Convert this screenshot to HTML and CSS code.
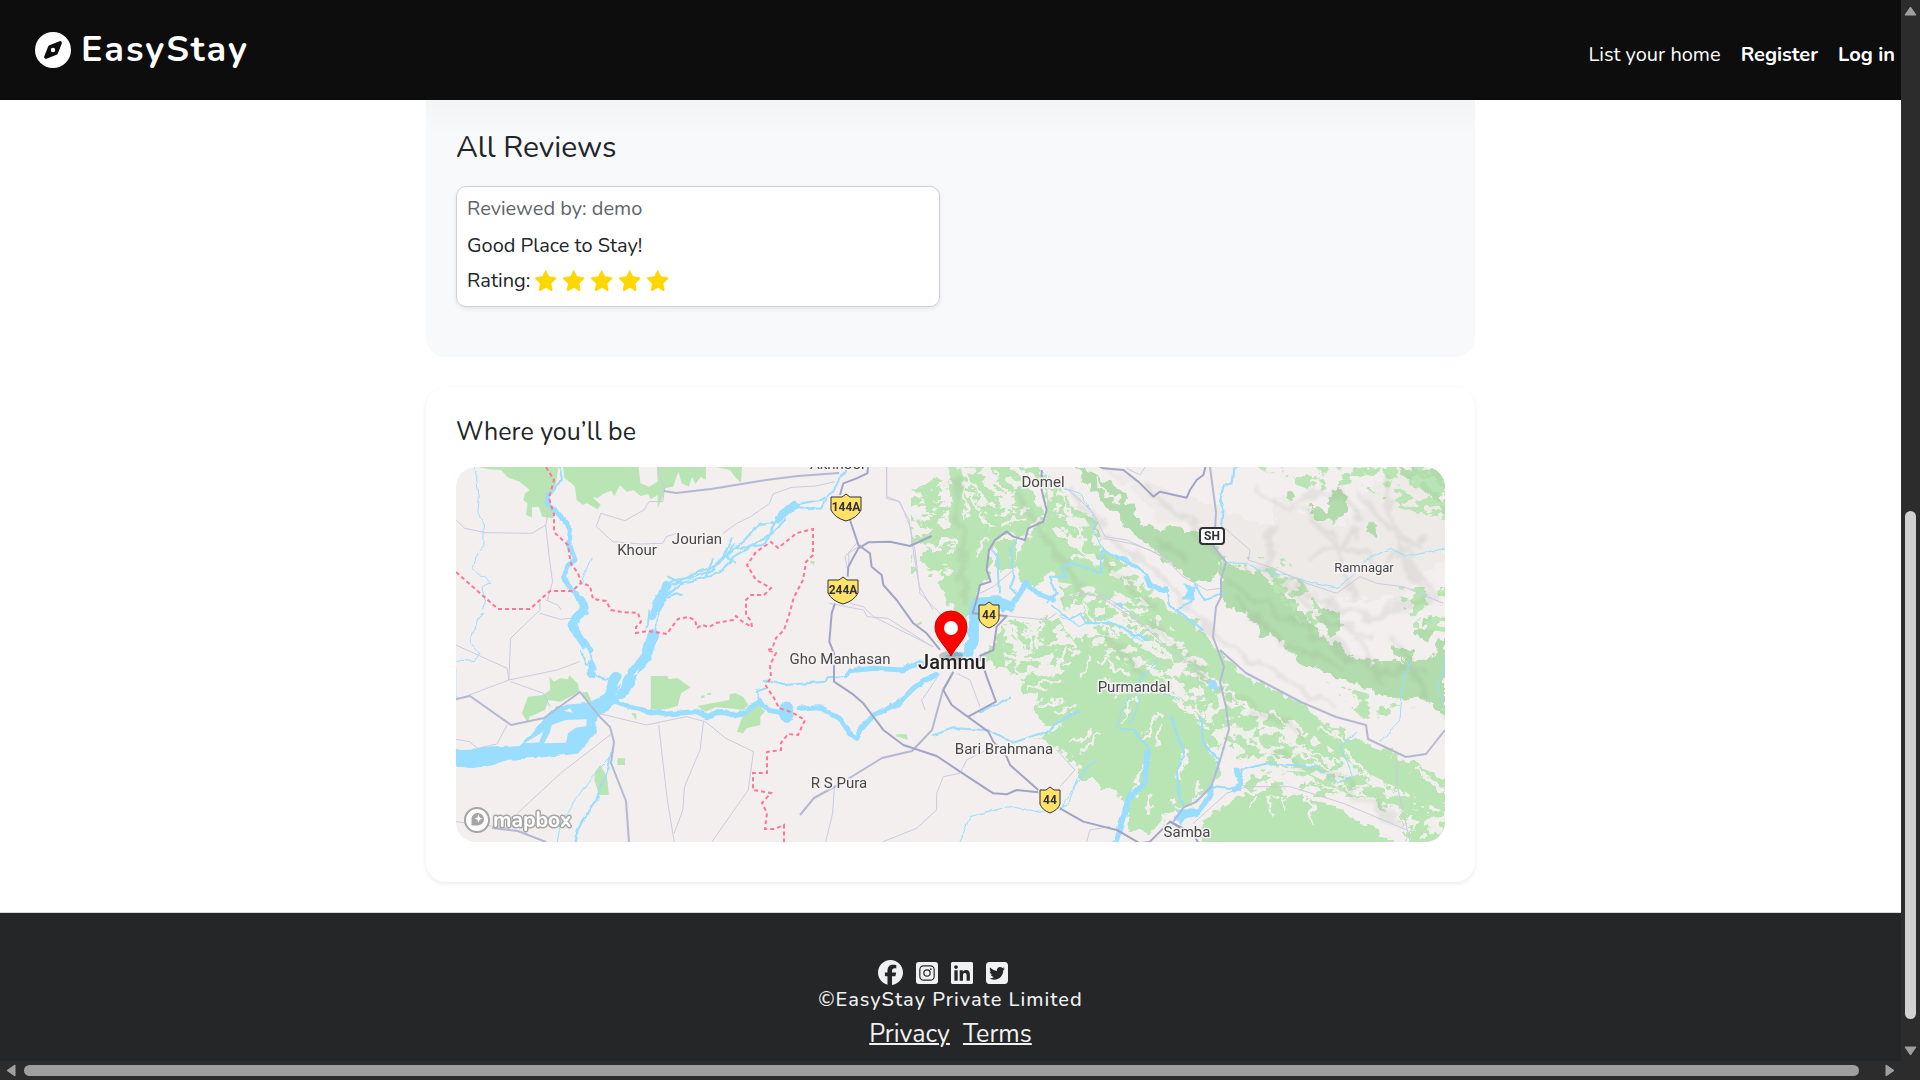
FILE: index.html
```html
<!DOCTYPE html>
<html lang="en">
<head>
<meta charset="utf-8">
<meta name="viewport" content="width=device-width, initial-scale=1">
<title>EasyStay</title>
<link rel="stylesheet" href="styles.css">
</head>
<body>
<div class="window">
  <div class="page">
    <header class="navbar">
      <a class="brand" href="#">
        <svg class="brand-icon" viewBox="0 0 512 512" aria-hidden="true"><path fill="currentColor" d="M256 512A256 256 0 1 0 256 0a256 256 0 1 0 0 512zm50.700-186.900L162.400 380.600c-19.400 7.500-38.500-11.600-31-31l55.500-144.300c3.300-8.500 9.900-15.100 18.400-18.400l144.300-55.500c19.400-7.500 38.500 11.600 31 31L325.100 306.700c-3.200 8.500-9.900 15.100-18.400 18.400zM288 256a32 32 0 1 0-64 0 32 32 0 1 0 64 0z"/></svg>
        <span>EasyStay</span>
      </a>
      <nav class="nav-links">
        <a href="#">List your home</a>
        <a class="strong" href="#">Register</a>
        <a class="strong" href="#">Log in</a>
      </nav>
    </header>

    <main class="content">
      <section class="reviews">
        <h2>All Reviews</h2>
        <article class="review-card">
          <p class="reviewer">Reviewed by: demo</p>
          <p>Good Place to Stay!</p>
          <p class="rating">Rating:
            <span class="stars" role="img" aria-label="5 out of 5">
              <svg viewBox="0 0 24 24"><use href="#star"/></svg>
              <svg viewBox="0 0 24 24"><use href="#star"/></svg>
              <svg viewBox="0 0 24 24"><use href="#star"/></svg>
              <svg viewBox="0 0 24 24"><use href="#star"/></svg>
              <svg viewBox="0 0 24 24"><use href="#star"/></svg>
            </span>
          </p>
        </article>
      </section>

      <section class="location">
        <h3>Where you’ll be</h3>
        <svg class="map" viewBox="0 0 989 375" preserveAspectRatio="xMidYMid slice" role="img" aria-label="Map of Jammu">
          <defs>
            <path id="star" d="M12 1.200l3.300 6.600 7.300 1.100c1 .2 1.300 1.200.6 1.900l-5.200 5.200 1.200 7.200c.2 1-.8 1.600-1.600 1.200L12 20.900l-6.600 3.500c-.8.400-1.800-.3-1.600-1.200L5 16 -.2 10.800c-.7-.7-.4-1.700.6-1.900L7.700 7.800 11 1.200c.3-.7.700-.7 1 0z" transform="translate(.6 -.6) scale(.96)"/>
            <filter id="rough" x="0" y="0" width="989" height="375" filterUnits="userSpaceOnUse">
              <feTurbulence type="fractalNoise" baseFrequency=".09" numOctaves="3" seed="4" result="n"/>
              <feDisplacementMap in="SourceGraphic" in2="n" scale="17" xChannelSelector="R" yChannelSelector="G"/>
            </filter>
            <filter id="mottle" x="0" y="0" width="989" height="375" filterUnits="userSpaceOnUse">
              <feTurbulence type="fractalNoise" baseFrequency=".07 .1" numOctaves="4" seed="12"/>
              <feColorMatrix values="0 0 0 0 0  0 0 0 0 0  0 0 0 0 0  24 0 0 0 -12.500" result="spots"/>
              <feComposite in="SourceGraphic" in2="spots" operator="in"/>
            </filter>
            <filter id="wobble" x="-10" y="-10" width="1009" height="395" filterUnits="userSpaceOnUse">
              <feTurbulence type="fractalNoise" baseFrequency=".08" numOctaves="2" seed="9" result="n"/>
              <feDisplacementMap in="SourceGraphic" in2="n" scale="5" xChannelSelector="R" yChannelSelector="G"/>
            </filter>
            <filter id="soft" x="0" y="0" width="989" height="375" filterUnits="userSpaceOnUse">
              <feTurbulence type="fractalNoise" baseFrequency=".05" numOctaves="3" seed="2" result="n"/>
              <feDisplacementMap in="SourceGraphic" in2="n" scale="22" xChannelSelector="R" yChannelSelector="G"/>
              <feGaussianBlur stdDeviation="1.500"/>
            </filter>
          </defs>
          <rect class="land" width="989" height="375"/>

          <!-- forests of the western plain -->
          <g class="forest">
            <g transform="translate(-36 -97) scale(.3444 .3333)">
              <path d="M170 291H402L395 340 375 380 388 445 355 440 345 410 325 412V442L308 435 312 400 300 390 305 370 318 360 290 335 255 322 235 300 200 298Z"/>
              <path d="M415 291H635L640 340 665 350 690 335 688 291H830V330L815 320 800 342 790 320 780 350 760 340 750 305 735 350 712 355 705 380 690 415V375L670 388 662 372 640 378 620 360 600 365 580 345 565 378 555 362 535 370 515 385 500 380 525 405 515 418 485 400 472 404 455 390 450 350 440 340 420 325Z"/>
              <path d="M860 291H935L932 338 918 325 900 300ZM1132 572l14 2-2 10-10-4z"/>
            </g>
            <g transform="translate(-16 133) scale(.3444 .3333)">
              <path d="M238 340L255 290 300 285 320 270 318 230 330 245 350 235 372 238 375 226 400 250 405 275 350 305 315 300 305 330 260 350 255 368Z"/>
              <path d="M612 228L660 228 665 238 690 234 710 250 728 262 700 280 690 318 655 328H612Z"/>
              <path d="M748 318L770 335 800 322 840 325 880 330 895 315 880 290 858 280 842 282 840 300Z"/>
              <path d="M862 395L880 345 925 312 943 335 930 350 930 375 890 385 880 400Z"/>
              <path d="M465 495L485 530 490 585 462 585 448 540 450 515ZM515 475h22v20h-22zM555 340h15v20zM412 278L428 275 442 310 430 315ZM758 288l10-2v8h-10zM775 280h12v4h-12zM1385 72l12-8 3 6-14 8zM1325 403h30l4 16-34-10z"/>
            </g>
          </g>

          <!-- forests of the hills -->
          <g filter="url(#rough)">
            <g class="shade" transform="translate(604 -7) scale(.3333)">
              <path d="M120 20L220 90 300 190 420 190 470 230 500 330 560 320 620 400 800 420 1000 420 1155 300V20H1000L900 130 850 200 720 170 700 120 650 100 640 200Z"/>
            </g>
            <g class="forest" transform="translate(324 -7) scale(.3333)">
              <path d="M505 10H680L720 60 770 110 795 180 745 200 730 240 690 210 640 250 625 300 635 350 600 385 575 440 560 490 515 485 510 430 470 370 520 330 500 300 530 260 510 200 505 120Z"/>
              <path d="M395 90l70-35 20 10-50 40zM420 130l60-20 10 15-50 30zM410 190l80-30 5 20-50 30zM430 220l60-10 10 20-50 30zM420 290l70-30 15 20-50 40zM440 320l50-15 20 15-55 20z"/>
              <path d="M780 40L830 60 860 110 900 150 950 190 960 240 940 300 960 330 920 330 870 320 840 350 790 350 760 380 710 350 700 310 740 230 790 190 805 140Z"/>
              <path d="M700 20H780V60L760 50Z"/>
              <path d="M650 240L710 240 700 320 660 340 645 300Z"/>
              <path d="M590 590L650 540 670 480 760 490 840 470 860 520 930 560 1000 560 1090 640 1140 650 1200 720V860L1150 900 1120 870 1050 790 1060 860 1110 880 1060 950 1010 985 960 985 950 910 870 890 780 830 850 800 790 790 760 750 790 720 730 700 700 650 640 610Z"/>
              <path d="M1120 870L1200 900 1190 1010 1150 1090 1100 1115 1045 1110 1060 1030 1110 920Z"/>
            </g>
            <g class="forest" transform="translate(604 -7) scale(.3333)">
              <path d="M0 130L60 180 130 250 170 300 250 350 270 390 330 450 400 480 450 540 500 590 560 650 640 690 700 720 790 790 900 840 960 870 1030 900 1155 960V1160H1050L1010 1060 930 1020 860 1000 790 970 750 940 640 920 560 900 500 860 490 800 430 740 370 690 300 640 250 590 170 560 90 500 0 440Z"/>
              <path d="M0 560L90 520 190 560 290 600 350 700 480 760 490 880 450 990 370 1040 290 980 330 900 300 830 250 1000 200 1070 170 960 60 960Z"/>
              <path d="M240 1110L200 1060 290 980 350 1040 300 1090Z"/>
              <path d="M420 1160L430 1080 520 1020 560 990 640 1020 700 990 800 1040 870 1060 960 1120 1040 1160Z"/>
            </g>
            <g class="forest deep" transform="translate(604 -7) scale(.3333)">
              <path d="M40 20L150 70 220 130 250 200 330 210 400 215 480 260 490 330 440 370 400 370 330 310 270 260 200 200 130 130 70 60Z"/>
              <path d="M490 310L560 320 620 360 690 415 740 480 800 540 900 600 1000 610 1050 600 1110 610 1130 560 1155 540V780L1110 720 1000 710 960 700 880 670 800 640 720 610 690 560 600 520 560 460 500 440 480 400Z"/>
              <path d="M810 85L860 110 865 160 820 190 770 170 745 140 810 145Z"/>
              <path d="M1010 20H1130L1155 60V170L1120 120 1060 70ZM930 190l25 15-15 30-15-15zM670 100l40 15v10l-40-10zM750 460l60-20 40 50-30 40zM1060 510l60-50 20 40-50 40zM1000 550l60 30-10 30-40-20z"/>
            </g>
            <!-- clearings and valleys -->
            <g class="glade" transform="translate(324 -7) scale(.3333)">
              <path d="M540 60l25 110M560 40l60 90M600 150l30 60M580 90l10 60M640 40l60 80M660 120l50 30M590 290l30-60M670 190l60-20M870 170l40 60M830 90l50 100M890 280l40 20M690 500l50 70M740 490l20 90M790 490l-20 70M680 590l70 10M710 640l80-20M740 680l110-20M860 560l-40 80M850 720l-60 10M820 760l60-20M930 590l-30 60M980 650l30 60M1060 710l-30 80M870 860l70-50M900 880l60-60M1130 760l-40 80M1100 900l-40 100M1120 1000l-20 70M960 600l80 40M840 520l20 30"/>
            </g>
            <g class="glade" transform="translate(604 -7) scale(.3333)">
              <path d="M0 470l90 50M60 440l110 90M150 430l90 60M200 480l180 150M380 630l90 60M250 600l130 120M320 680l60 60M490 680l120 100M510 720l80 40M640 760l90 60M520 820l150 90M660 840l180 70M700 870l160 90M860 880l130 130M780 800l80 40M820 960l120 60M560 930l240 50M390 760l60 50M340 720l120 60M300 800l-10 60M430 850l50 50M470 940l80 10M620 1000l20 70M680 1000l-10 50M740 1010l20 80M590 1000l-20 50M1060 930l90 60M1000 1040l50 80M380 870l-30 100M420 960l-10 50M260 900l-40 90M100 60l80 70M20 220l90 90M160 330l90 60"/>
            </g>
          </g>

          <!-- broken tree cover: open ground inside the forests, groves outside them -->
          <g class="open" filter="url(#mottle)">
            <path d="M500 0H560L575 45 545 60 510 30ZM545 150L600 150 625 185 590 225 550 210ZM600 115L680 125 790 235 820 290 770 320 745 260 700 210 640 185 600 150ZM770 235L840 255 900 300 989 345V375H960L880 335 800 320ZM615 45L650 70 700 120 680 130 630 90ZM590 10L610 20 640 70 620 100 595 60Z"/>
          </g>
          <g class="forest" filter="url(#mottle)">
            <path d="M800 0H989V55L940 40 900 15 860 25 820 10ZM940 120H989V165L955 160ZM455 25L500 15 500 110 455 110ZM765 300L850 305 900 330 800 330ZM870 215L960 240 910 255ZM790 90L830 90 870 150 850 165Z"/>
          </g>

          <!-- relief of the ridges -->
          <g filter="url(#soft)" class="relief">
            <path d="M610 20L650 70 700 105 740 150 800 195 880 240M500 10l3 60 5 70M560 20l30 50 40 60M640 90l60 50M690 150l70 70 90 50M650 170l40 40M690 20l40 35 30 10M720 45l40 40M770 110l40 30 60 30 40 30 60 5M800 100l60 30 50 20 70-20M840 40l40 30 20 60M900 20l30 40 40 20M930 10l10 60 30 60M820 60l-10 50M870 140l50 10 60-20M820 290l60 20 70 50M700 70l30 20"/>
            <path d="M800 20l30 20 40-20 40 30M850 90l40-10 30 20 50-30M900 60l-20 40M950 90l30 40M860 60l20 20M780 130l50 50 60 20M900 170l30 50M940 170l30 60M830 110l30 40 60 20"/>
          </g>

          <!-- rivers and streams -->
          <g class="water" filter="url(#wobble)">
            <g transform="translate(-36 -97) scale(.3444 .3333)">
              <path class="w1" d="M158 280L165 330 172 380 168 430 187 465 185 530 160 560 152 590 175 615 190 618 208 640 180 655 190 690 185 720M500 565L480 610 468 640"/>
              <path class="w2" d="M408 280L415 325 395 355 372 375"/>
              <path class="w4" d="M370 375V400L410 440 437 480 432 520 450 570 425 590 420 625 445 665 470 690 480 725"/>
              <path class="w2" d="M1250 285L1215 330 1200 365 1160 390 1085 405 1060 440 1030 455 985 462 945 510 905 545 870 575 850 600 800 620 740 630 715 650 700 690M1180 385L1165 415 1130 418 1095 410M1060 450L1020 490 960 530 910 560 880 600 820 625 760 640 710 680M905 505l-20 50 30 20M1030 455l-30 70-80 10M850 565l-20 55M720 620l40 20-40 30M700 690l40-20 20 5"/>
              <path class="w7" d="M1088 405L1068 422 1040 445"/>
              <path class="w2" d="M915 520L895 550 850 590 790 615 715 655"/>
              <path class="w7" d="M715 645L700 690 680 720"/>
            </g>
            <g transform="translate(-16 133) scale(.3444 .3333)">
              <path class="w7" d="M410 0L420 20 382 75 405 110 430 150"/>
              <path class="w2" d="M410 155L425 195M430 150L455 205"/>
              <path class="w7" d="M440 190L440 222"/>
              <path class="w2" d="M450 220L480 240 520 225M655 0L635 30M605 30L600 85M640 30L625 90"/>
              <path class="w7" d="M635 0L615 50"/>
              <path class="w9" d="M620 105L600 170 560 220 530 280"/>
              <path class="w9" d="M510 235L495 285 450 340"/>
              <path class="fill" d="M40 450L230 440 270 400 310 350 340 318 430 310 490 280 530 290 460 350 450 400 400 460 300 470 200 478 150 495 90 503 40 496Z"/>
              <path class="w4" d="M500 300L560 325 650 343 740 335 775 350 800 338 830 338 860 350 890 335 930 300 955 335 985 340"/>
              <ellipse class="fill" cx="1006" cy="335" rx="22" ry="30"/>
              <path class="w4" d="M1043 325L1100 320 1140 345 1165 360 1190 400 1210 415 1225 385 1260 345 1330 310 1380 260 1440 225"/>
              <path class="w2" d="M930 310L920 275 945 265M940 240L1000 255 1120 245 1125 232 1180 228"/>
              <path class="w4" d="M1180 222L1190 212 1260 205 1340 210 1400 185 1420 195"/>
              <path class="w2" d="M500 440L490 500 460 590 425 640 400 690 390 730"/>
              <path class="w1" d="M490 480L430 545 380 620 350 670 340 730M130 40L105 60 90 130 115 160 100 185 46 180M46 210V300"/>
            </g>
            <g transform="translate(324 -7) scale(.3333)">
              <path class="w4" d="M670 450L700 430 740 370 770 400 820 420M450 615L540 580"/>
              <path class="w9" d="M560 590L580 540 580 490 590 440"/>
              <path class="w9" d="M590 430L650 425 690 440"/>
              <path class="w2" d="M630 265L655 290 660 400M710 235L690 270 700 350 690 380 710 400M800 430L830 400 810 350 860 350 840 325 880 310 960 340 965 270 1040 300 1100 345M820 440L870 480 900 460 920 490 1000 490 1100 540M460 825L520 805 620 810 700 848 800 815 850 775 900 755M600 760L690 710"/>
              <path class="w4" d="M1050 1000L1010 1140M1100 350L1110 380 1160 390"/>
              <path class="w1" d="M790 35L840 80 900 100 940 170 940 210 970 265M1140 600L1080 650 1080 720 1050 790M950 900L900 940 870 1030 780 1060 680 1040 570 1070 540 1145M1110 690L1200 720"/>
            </g>
            <g transform="translate(604 -7) scale(.3333)">
              <path class="w2" d="M545 10L520 30 515 70 490 80 480 120 490 150 487 200M130 265L170 290 220 320 262 345 270 385 320 390 325 430 345 450 390 430 410 370 430 420 470 410 490 395M345 450L380 470 425 510M170 800L220 810 270 870 255 970 200 1020 180 1120 160 1145M333 770L355 830 375 890 350 930 360 1020 375 1040M420 770L430 850 480 900 460 960M450 980L540 990 545 930 620 910 760 920"/>
              <path class="w4" d="M260 880L255 970 205 1020 180 1100M350 1075L410 1060 450 1010 450 975M530 930L545 970 520 990"/>
              <path class="fill" d="M372 375l35 5-8 40-32 0 18-25zM447 665l18-4 8 28-24-2zM310 378h14v18h-14zM350 1050l60 0-50 40zM165 430h18l5 15z"/>
              <path class="w1" d="M490 310L560 310 600 330 680 345 760 370 830 385 880 340 920 300 990 265 1040 290 1155 265M1050 605L1030 660 1020 780 960 845M1155 590L1135 680 1155 750M760 910L830 970 880 950 840 860 890 820M290 600L210 700 170 800M100 900L40 990 0 1050M0 470L60 500 120 470 180 500 250 545"/>
            </g>
          </g>
          <g class="island" transform="translate(-16 133) scale(.3444 .3333)">
            <path d="M302 430L366 428 372 400 395 383 425 378 426 358 365 360 325 375 318 400ZM245 430L300 395 288 427ZM360 333L378 325 386 338ZM413 150L425 142 436 165 435 185ZM512 262L532 222 528 250ZM560 228L578 205 572 222Z"/>
          </g>

          <!-- local roads -->
          <g class="road minor">
            <g transform="translate(-36 -97) scale(.3444 .3333)">
              <path d="M105 450L130 475 190 488 325 490 365 465 375 560 385 635 370 690M365 465L372 430M710 355L705 395 665 395 650 420 595 452 525 430 512 470 560 515 640 522 705 520 715 500 745 490M690 291L695 320 710 350M880 490L920 460 960 440 1015 400 1025 372 1080 352 1150 348 1205 335M1355 291L1355 385 1390 395 1420 450 1435 560 1450 650 1490 720M1280 525L1245 550 1245 590M365 690L400 705 410 720"/>
            </g>
            <g transform="translate(-16 133) scale(.3444 .3333)">
              <path d="M46 135L195 205 200 240 205 115 245 75 290 30 290 0M46 300L200 240 340 210 405 185M205 245L300 280 320 320M290 40L350 58 380 55M46 418L85 425 110 445 165 432 195 375M500 400L350 520 225 640M460 340L600 375 715 350 770 365 830 415 910 455 895 570 790 725M635 375L660 600 680 725M765 365L755 450 710 560 705 630 680 700M46 665L200 685M1145 560L1140 640 1120 725M1130 10L1230 30 1240 50 1300 55 1430 140"/>
            </g>
            <g transform="translate(324 -7) scale(.3333)">
              <path d="M230 250L195 290 205 340M320 20V110L360 125 390 200 405 270 420 400 490 470M210 430L250 440 280 470 460 560M655 465L750 475 800 480 830 460M700 330L640 380 600 400M480 640L440 700 425 720 435 750M530 640L570 660 600 740M620 870L560 900 540 940 490 950 470 1000 470 1050 410 1105 310 1145M830 870L885 930 840 980M840 420L900 400 960 410 1100 500M970 235L1050 250 1110 270 1180 310"/>
            </g>
            <g transform="translate(604 -7) scale(.3333)">
              <path d="M0 70L60 120 100 160 135 230 200 240 310 290 370 350 440 390 485 385M495 205L570 270 565 300 640 325 740 370 830 400 900 350 950 370 1030 380 1150 430M120 400L200 450 320 560 400 620 470 680M400 1090L500 1000 560 980 690 980 850 1030 1040 1110M1010 900L1010 970 1050 1145M200 25l40 20 20-30M150 1100L90 1110 80 1145"/>
            </g>
          </g>
          <!-- highways -->
          <g class="road mid">
            <path d="M208 24L220 26 255 22 310 13 342 9 383 6M0 232L14 229 55 258 88 251 124 225 143 249 154 260 158 275 155 296 170 334 173 375M36 361L62 364 90 375M344 348L358 331 380 319 M379 320L426 291 456 284 476 263 487 223 497 206M754 0L760 45 758 80 770 95 765 112 765 130 760 140 757 170 768 200 764 215 770 240 773 262 765 290 755 320 740 335 728 340 717 355"/>
            <path d="M764 183L790 206 845 235 880 250 910 258 912 272 950 290 970 287 989 263"/>
          </g>
          <g class="road major">
            <g transform="translate(324 -7) scale(.3333)">
              <path d="M265 15L262 40 230 55 190 70 180 105M210 180L235 255 270 280 275 320 305 345 310 375 350 420 400 490 440 520 480 570M455 228L390 258 330 245 265 247 235 265 205 320 203 350M165 430L155 460 148 545 162 580 162 665 215 700 250 730 310 810 370 855 470 888 540 935 640 1000 680 1003 710 990 775 997M785 30L785 90 800 150 790 185 745 205 735 240 700 230 680 215 645 240 627 270 620 330 632 365 600 375 590 420 578 460 680 468 650 500 640 570 600 588 620 650 648 725 565 770M520 635L490 690 515 735 625 815 640 845 680 890 690 915 775 990M840 1045L910 1085 1010 1110 1080 1150 1110 1145 1170 1085 1210 1110"/>
            </g>
            <g transform="translate(604 -7) scale(.3333)">
              <path d="M110 15L130 25 190 30 235 65 280 110 300 95 380 113 390 90 410 60 430 45 438 15M330 1085L400 1120 415 1150"/>
            </g>
          </g>

          <!-- state border -->
          <g class="border">
            <path id="border" d="M90 0L98 13 93 31 98 48V65L112 78 115 97 122 106 125 116 134 119 137 132 150 134 155 143 166 145 182 146 185 155 180 160 180 166 192 164 211 167 215 161 222 152 232 150 239 153 241 161 246 158 253 160 260 156 277 153 280 149 287 155 296 160 295 154 290 148V133L295 128 308 128 315 121 300 113 291 98 300 85 315 75 322 81 341 66 357 62V88L350 95 347 113 338 130 333 148 328 163 320 171 316 182 311 183 320 186 314 198 315 210 310 219 318 231 323 241 335 245 349 253 342 268 332 267 325 276V283L311 285V306L297 306 297 323 315 326 306 336 311 346 309 362 318 362 328 358V375"/>
            <path d="M0 105L42 142H74L94 124H116L125 116"/>
          </g>

          <!-- place names -->
          <g class="place">
            <text x="382" y="2">Akhnoor</text>
            <text x="181" y="88">Khour</text>
            <text x="241" y="77">Jourian</text>
            <text x="587" y="20">Domel</text>
            <text x="384" y="197">Gho Manhasan</text>
            <text x="678" y="225">Purmandal</text>
            <text x="548" y="287">Bari Brahmana</text>
            <text x="383" y="321">R S Pura</text>
            <text x="731" y="370">Samba</text>
            <text class="small" x="908" y="105">Ramnagar</text>
            <text class="city" x="496" y="202">Jammu</text>
          </g>

          <!-- route shields -->
          <g class="shield">
            <path d="M375 30H386L390 27 394 30H405V43Q401 51 390 54 379 51 375 43Z"/>
            <path d="M372 113H383L387 110 391 113H402V126Q398 134 387 137 376 134 372 126Z"/>
            <path d="M523 138H529L533 135 537 138H543V152Q541 158 533 161 525 158 523 152Z"/>
            <path d="M584 323H590L594 320 598 323H604V337Q602 343 594 346 586 343 584 337Z"/>
            <rect class="plain" x="744" y="61" width="24" height="16" rx="3"/>
            <text x="390" y="44">144A</text>
            <text x="387" y="127">244A</text>
            <text x="533" y="152">44</text>
            <text x="594" y="337">44</text>
            <text x="756" y="73">SH</text>
          </g>

          <!-- marker -->
          <ellipse cx="495" cy="189" rx="12" ry="5" fill="#333" opacity=".25"/>
          <path fill="red" stroke="#d00000" d="M495 189C489 178 479 171 479 160A16 16 0 0 1 511 160C511 171 501 178 495 189Z"/>
          <circle cx="495" cy="161" r="7" fill="#fff"/>

          <!-- map provider -->
          <g class="provider">
            <circle cx="21" cy="353" r="12"/>
            <path d="M15.500 358.500V351A6.300 6.300 0 1 1 22 358.500ZM22.500 347.500L23.700 350.500 26.500 351.500 23.700 352.700 22.500 355.500 21.300 352.700 18.500 351.500 21.300 350.500Z" fill-rule="evenodd"/>
            <text x="37" y="360">mapbox</text>
          </g>
        </svg>
      </section>
    </main>

    <footer class="footer">
      <div class="socials">
        <a href="#" aria-label="Facebook"><svg class="round" viewBox="0 0 512 512"><path fill="currentColor" d="M512 256C512 114.600 397.400 0 256 0S0 114.600 0 256c0 120 82.700 220.800 194.200 248.500V334.200h-52.800V256h52.800v-33.700c0-87.100 39.400-127.500 125-127.500 16.200 0 44.200 3.200 55.700 6.400v70.800c-6-.6-16.500-1-29.600-1-42 0-58.200 15.900-58.200 57.200V256h83.600l-14.400 78.200h-69.300v175.900C413.800 494.800 512 386.900 512 256z"/></svg></a>
        <a href="#" aria-label="Instagram"><svg viewBox="0 0 448 448"><rect width="448" height="448" rx="56" fill="currentColor"/><g fill="none" stroke="#242628" stroke-width="24"><rect x="78" y="78" width="292" height="292" rx="76"/><circle cx="224" cy="224" r="64"/></g><circle cx="302" cy="146" r="17" fill="#242628"/></svg></a>
        <a href="#" aria-label="LinkedIn"><svg viewBox="0 32 448 448"><path fill="currentColor" d="M416 32H31.900C14.300 32 0 46.500 0 64.300v383.400C0 465.500 14.300 480 31.900 480H416c17.600 0 32-14.500 32-32.300V64.300c0-17.800-14.400-32.300-32-32.300zM135.400 416H69V202.200h66.500V416zm-33.200-243c-21.300 0-38.500-17.300-38.500-38.500S80.900 96 102.200 96c21.200 0 38.500 17.300 38.500 38.500 0 21.300-17.200 38.500-38.500 38.500zm282.100 243h-66.400V312c0-24.800-.5-56.700-34.500-56.700-34.600 0-39.900 27-39.900 54.900V416h-66.400V202.200h63.700v29.200h.9c8.900-16.800 30.600-34.500 62.900-34.500 67.200 0 79.700 44.300 79.700 101.900V416z"/></svg></a>
        <a href="#" aria-label="Twitter"><svg viewBox="0 32 448 448"><path fill="currentColor" d="M64 32C28.700 32 0 60.700 0 96v320c0 35.300 28.700 64 64 64h320c35.300 0 64-28.700 64-64V96c0-35.300-28.700-64-64-64H64zm287.300 167.100c.2 2.800.2 5.700.2 8.500 0 86.700-66 186.600-186.600 186.600-37.200 0-71.700-10.800-100.700-29.400 5.300.6 10.400.8 15.800.8 30.700 0 58.900-10.400 81.400-28-28.800-.6-53-19.500-61.300-45.500 10.100 1.500 19.200 1.500 29.600-1.200-30-6.100-52.500-32.500-52.500-64.400v-.8c8.700 4.900 18.900 7.900 29.600 8.300-18.300-12.200-29.200-32.700-29.200-54.600 0-12.200 3.200-23.400 8.900-33.100 32.300 39.800 80.800 65.800 135.200 68.600-9.300-44.500 24-80.600 64-80.600 18.900 0 35.900 7.900 47.900 20.700 14.800-2.800 29-8.300 41.600-15.800-4.900 15.200-15.200 28-28.800 36.100 13.200-1.400 26-5.100 37.800-10.200-8.900 13.100-20.100 24.700-32.900 34z"/></svg></a>
      </div>
      <div class="copyright">©EasyStay Private Limited</div>
      <div class="legal"><a href="#">Privacy</a><a href="#">Terms</a></div>
    </footer>
  </div>

  <div class="scroll scroll-y" aria-hidden="true">
    <svg class="arrow" viewBox="0 0 13 10"><path d="M6.500 1L12 9H1Z"/></svg>
    <div class="rail"><div class="thumb"></div></div>
    <svg class="arrow" viewBox="0 0 13 10"><path d="M6.500 9L12 1H1Z"/></svg>
  </div>
  <div class="scroll scroll-x" aria-hidden="true">
    <svg class="arrow" viewBox="0 0 10 13"><path d="M1 6.500L9 1V12Z"/></svg>
    <div class="thumb"></div>
    <svg class="arrow" viewBox="0 0 10 13"><path d="M9 6.500L1 1V12Z"/></svg>
  </div>
</div>
</body>
</html>
```
FILE: styles.css
```css
* { box-sizing: border-box; }

body {
  margin: 0;
  background: #2c2c2c;
  color: #212529;
  font: 20px/30px Nunito, Lato, "Open Sans", sans-serif;
}

a { color: inherit; text-decoration: none; }
h2, h3, p { margin: 0; font-weight: 400; }
svg { display: block; }

.window {
  display: grid;
  grid-template: minmax(0, 1fr) 19px / minmax(0, 1fr) 19px;
  height: 100vh;
}

.page {
  display: flex;
  flex-direction: column;
  overflow: hidden;
  background: #fff;
}

/* header */
.navbar {
  display: flex;
  flex: none;
  align-items: center;
  justify-content: space-between;
  height: 100px;
  padding: 0 6px 0 35px;
  background: #0d0d0d;
  color: #fff;
}
.brand {
  display: flex;
  align-items: center;
  gap: 10px;
  font-size: 36px;
  font-weight: 700;
  letter-spacing: 2px;
}
.brand-icon { width: 36px; height: 36px; }
.nav-links { display: flex; gap: 20px; padding-top: 10px; }
.strong { font-weight: 700; }

/* content column */
.content {
  display: flex;
  flex: none;
  flex-direction: column;
  gap: 30px;
  width: 1049px;
  max-width: 100%;
  margin: 0 auto;
  padding-bottom: 30px;
}
.reviews {
  padding: 30px 30px 50px;
  border-radius: 0 0 20px 20px;
  background: linear-gradient(#f3f4f6, #f8f9fb 34px);
}
.reviews h2 { font-size: 30px; line-height: 36px; margin-bottom: 20px; }
.review-card {
  width: 484px;
  max-width: 100%;
  min-height: 121px;
  padding: 7px 10px 6px;
  border: 1px solid #d0d1d2;
  border-radius: 10px;
  background: #fff;
  box-shadow: 0 2px 5px rgba(0, 0, 0, .08);
}
.reviewer { margin-bottom: 7px; color: #5f6469; }
.rating { display: flex; align-items: center; gap: 5px; margin-top: 5px; }
.stars { display: flex; gap: 6px; }
.stars svg { width: 22px; height: 22px; fill: gold; }

.location {
  padding: 30px 30px 40px;
  border-radius: 20px;
  background: #fff;
  box-shadow: 0 2px 5px rgba(0, 0, 0, .08);
}
.location h3 { font-size: 25px; line-height: 30px; margin-bottom: 20px; }

/* map */
.map { width: 100%; height: 375px; border-radius: 20px; }
.map path { vector-effect: non-scaling-stroke; }
.land { fill: #f2efee; }
.forest { fill: #b9e4b3; }
.deep { fill: #b2dcad; }
.open { fill: #f0efec; }
.shade { fill: #edeae8; }
.glade { fill: none; stroke: #f2efee; stroke-width: 3; }
.relief { fill: none; stroke: #8c8f85; stroke-width: 5; opacity: .13; }
.water { fill: none; stroke: #99ddff; stroke-linejoin: round; stroke-linecap: round; }
.water .fill { fill: #99ddff; }
.w1 { stroke-width: 1; }
.w2 { stroke-width: 2; }
.w4 { stroke-width: 5; }
.w7 { stroke-width: 8; }
.w9 { stroke-width: 11; }
.island { fill: #f2efee; }
.road { fill: none; stroke-linejoin: round; }
.minor { stroke: #c9cbdf; stroke-width: 1; }
.mid { stroke: #b5b8d2; stroke-width: 2; }
.major { stroke: #a2a4c5; stroke-width: 2; }
.border { fill: none; stroke: #ff7597; stroke-width: 2; stroke-dasharray: 4 3; }
.place text {
  fill: #46474b;
  stroke: #f6f3f2;
  stroke-width: 3px;
  paint-order: stroke;
  font: 15px Roboto, sans-serif;
  text-anchor: middle;
}
.place .small { font-size: 13px; }
.place .city { fill: #222; font-size: 20px; font-weight: 500; }
.shield { fill: #ffe266; stroke: #303038; stroke-width: 1; }
.shield .plain { fill: #fff; stroke-width: 2; }
.shield text {
  fill: #303038;
  stroke: none;
  font: 700 12px Roboto, sans-serif;
  text-anchor: middle;
}
.provider circle { fill: #fff; stroke: #a5a5a5; stroke-width: 2; }
.provider path { fill: #a5a5a5; }
.provider text {
  fill: #fff;
  stroke: #a5a5a5;
  stroke-width: 3px;
  paint-order: stroke;
  font: 700 21px Nunito, Lato, sans-serif;
}

/* footer */
.footer {
  display: flex;
  flex: 1 0 auto;
  flex-direction: column;
  align-items: center;
  padding-top: 47px;
  border-top: 1px solid #d9d9d9;
  background: #242628;
  color: #f1f1f1;
}
.socials { display: flex; align-items: center; gap: 13px; height: 25px; padding-right: 15px; }
.socials svg { width: 22px; height: 22px; }
.socials .round { width: 25px; height: 25px; }
.copyright { font-weight: 500; letter-spacing: 1px; }
.legal { display: flex; gap: 13px; margin-top: 3px; font-size: 25px; line-height: 32px; }
.legal a { text-decoration: underline; text-decoration-thickness: 2px; }

/* scroll bars */
.scroll { display: flex; align-items: center; background: #2c2c2c; }
.arrow { flex: none; fill: #9f9f9f; stroke: #9f9f9f; stroke-linejoin: round; }
.scroll-y { flex-direction: column; padding: 6px 0 5px; }
.scroll-y .arrow { width: 13px; height: 10px; }
.rail { display: flex; flex: 1; flex-direction: column; justify-content: flex-end; padding-bottom: 27px; }
.scroll-y .thumb { width: 11px; height: 47vh; border-radius: 6px; background: #d1d1d1; }
.scroll-x { gap: 8px; padding: 0 6px; }
.scroll-x .arrow { width: 10px; height: 13px; }
.scroll-x .thumb { flex: 1; height: 11px; margin-right: 18px; border-radius: 6px; background: #9f9f9f; }
```
